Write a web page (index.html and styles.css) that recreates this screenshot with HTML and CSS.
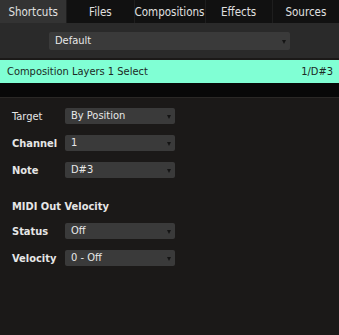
FILE: index.html
```html
<!DOCTYPE html>
<html lang="en">
  <head>
    <meta charset="UTF-8" />
    <title>Shortcuts</title>
    <link rel="stylesheet" href="styles.css">
  </head>
  <body>
    <div class="tabs">
      <div class="tab active">Shortcuts</div>
      <div class="tab">Files</div>
      <div class="tab">Compositions</div>
      <div class="tab">Effects</div>
      <div class="tab">Sources</div>
    </div>

    <div class="preset-bar">
      <div class="select preset">Default<span class="arrow"></span></div>
    </div>

    <div class="shortcut-row">
      <span>Composition Layers 1 Select</span>
      <span>1/D#3</span>
    </div>

    <div class="gap-band"></div>

    <div class="editor">
      <div class="field">
        <label class="plain">Target</label>
        <div class="select">By Position<span class="arrow"></span></div>
      </div>
      <div class="field">
        <label>Channel</label>
        <div class="select">1<span class="arrow"></span></div>
      </div>
      <div class="field">
        <label>Note</label>
        <div class="select">D#3<span class="arrow"></span></div>
      </div>

      <h2>MIDI Out Velocity</h2>

      <div class="field">
        <label>Status</label>
        <div class="select">Off<span class="arrow"></span></div>
      </div>
      <div class="field">
        <label>Velocity</label>
        <div class="select">0 - Off<span class="arrow"></span></div>
      </div>
    </div>
  </body>
</html>
```

FILE: styles.css
```css
html,
body {
  margin: 0;
  height: 100%;
}
body {
  background-color: #1b1918;
  font-family: "DejaVu Sans Condensed", "DejaVu Sans", sans-serif;
  font-size: 11px;
  color: #e6e6e6;
}
.tabs {
  display: flex;
  height: 23px;
  background-color: #111;
}
.tab {
  flex: 1;
  display: flex;
  align-items: center;
  justify-content: center;
  border-left: 1px solid #1e1e1e;
  color: #e0e0e0;
  font-size: 11.5px;
}
.tab:first-child {
  border-left: none;
}
.tab.active {
  background-color: #333;
}
.preset-bar {
  background-color: #2a2a2a;
  padding: 9px 49px 8px 49px;
  height: 18px;
}
.select {
  position: relative;
  height: 16px;
  line-height: 16px;
  background-color: #3a3a3a;
  border-radius: 2px;
  padding-left: 6px;
  color: #e8e8e8;
}
.preset {
  height: 18px;
  line-height: 18px;
}
.arrow {
  position: absolute;
  right: 4px;
  top: 50%;
  margin-top: -1px;
  border-left: 2.5px solid transparent;
  border-right: 2.5px solid transparent;
  border-top: 4px solid #141414;
}
.shortcut-row {
  display: flex;
  justify-content: space-between;
  margin-top: 2px;
  height: 23px;
  line-height: 23px;
  padding: 0 6px 0 7px;
  background-color: #80ffd4;
  color: #1c2a24;
}
.gap-band {
  height: 14px;
  background-color: #080808;
  border-bottom: 1px solid #2a2826;
}
.editor {
  padding: 10px 0 0 12px;
}
.field {
  display: flex;
  align-items: center;
  height: 16px;
  margin-bottom: 11px;
}
.field label {
  width: 53px;
  font-weight: bold;
}
.field label.plain {
  font-weight: normal;
}
.field .select {
  width: 104px;
}
h2 {
  font-size: 11px;
  font-weight: bold;
  margin: 22px 0 10px 0;
  line-height: 13px;
}
```
